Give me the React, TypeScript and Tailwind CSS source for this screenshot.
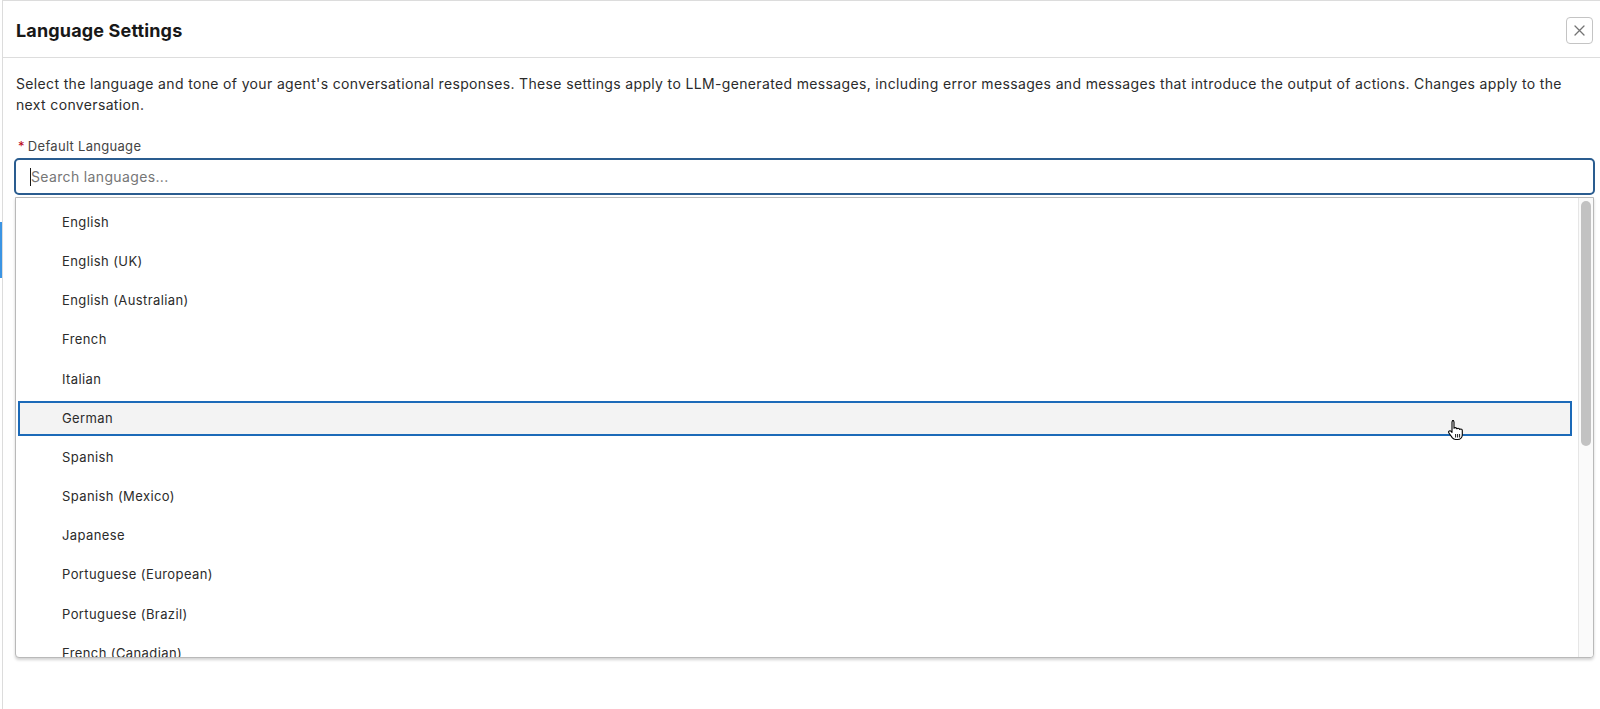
import React from "react";

const languages = [
  "English",
  "English (UK)",
  "English (Australian)",
  "French",
  "Italian",
  "German",
  "Spanish",
  "Spanish (Mexico)",
  "Japanese",
  "Portuguese (European)",
  "Portuguese (Brazil)",
  "French (Canadian)",
  "Chinese (Simplified)",
];

function HandCursor() {
  return (
    <svg width="18" height="22" viewBox="0 0 18 22" className="absolute left-[1429px] top-[20px] z-10">
      <path
        d="M5.5 1.5c.9 0 1.5.7 1.5 1.5v6.2c.3-.4.8-.6 1.3-.6.8 0 1.4.5 1.5 1.2.3-.4.8-.6 1.3-.6.8 0 1.4.6 1.5 1.3.3-.3.7-.5 1.2-.5.9 0 1.5.7 1.5 1.6v4.2c0 2.7-2 4.7-4.6 4.7H8.6c-1.3 0-2.4-.6-3.2-1.6L1.9 14c-.5-.7-.4-1.6.3-2 .6-.4 1.4-.3 1.9.3l.9 1.1V3c0-.8.6-1.5 1.5-1.5z"
        fill="#ffffff"
        stroke="#000000"
        strokeWidth="1.1"
        strokeLinejoin="round"
      />
      <path d="M8.6 15v3.5M10.6 15v3.5M12.6 15v3.5" stroke="#000" strokeWidth="0.9" />
    </svg>
  );
}

export default function App() {
  return (
    <div className="flex h-[709px] w-[1600px] overflow-hidden bg-white font-['Inter',sans-serif] text-[#181818]">
      <div className="w-[2px] shrink-0 bg-white pt-[222px]">
        <div className="h-[56px] w-[2px] bg-[#3b94e3]" />
      </div>
      <div className="flex min-w-0 flex-1 flex-col border-l border-t border-[#dcdcdc] bg-white">
        <div className="flex h-[57px] shrink-0 items-center justify-between border-b border-[#dddddd] pl-[13px] pr-[7px] pt-[2px]">
          <h2 className="text-[18px] font-bold tracking-[0.15px] text-[#181818]">Language Settings</h2>
          <button className="flex h-[27px] w-[27px] items-center justify-center rounded-[4px] border border-[#c4c4c4] bg-white">
            <svg width="11" height="11" viewBox="0 0 11 11">
              <path d="M1 1L10 10M10 1L1 10" stroke="#747474" strokeWidth="1.3" strokeLinecap="round" />
            </svg>
          </button>
        </div>
        <div className="flex flex-1 flex-col pl-[11px] pr-[5px] pt-[15px]">
          <p className="pl-[2px] pr-[20px] text-[14px] leading-[21px] tracking-[0.35px] text-[#2b2b2b]">
            Select the language and tone of your agent's conversational responses. These settings apply to LLM-generated messages, including error messages and messages that introduce the output of actions. Changes apply to the next conversation.
          </p>
          <label className="mt-[23px] flex items-center pl-[4px] text-[13px] leading-[16px] tracking-[0.3px] text-[#444444]">
            <span className="mr-[3px] text-[#ba0517]">*</span>
            Default Language
          </label>
          <div className="mt-[4px] flex h-[37px] items-center rounded-[5px] border-2 border-[#2a5c8f] bg-white pl-[14px]">
            <span className="h-[18px] w-[1px] bg-[#181818]" />
            <span className="text-[14px] tracking-[0.35px] text-[#767676]">Search languages...</span>
          </div>
          <div className="relative mx-[1px] mt-[2px] flex h-[461px] overflow-hidden rounded-b-[4px] border border-[#b9b9b9] bg-white shadow-[0_2px_3px_rgba(0,0,0,0.18)]">
            <div className="flex-1 overflow-hidden pl-[2px] pr-[6px] pt-[5px]">
              {languages.map((lang) => {
                const active = lang === "German";
                return (
                  <div key={lang} className="relative h-[39.2px] py-[2px]">
                    <div
                      className={
                        active
                          ? "flex h-[35px] items-center border-2 border-[#1c6ab8] bg-[#f3f3f3] pl-[42px] text-[13px] tracking-[0.4px] text-[#2b2b2b]"
                          : "flex h-[35px] items-center border-2 border-transparent pl-[42px] text-[13px] tracking-[0.4px] text-[#2b2b2b]"
                      }
                    >
                      {lang}
                    </div>
                    {active && <HandCursor />}
                  </div>
                );
              })}
            </div>
            <div className="w-[15px] shrink-0 border-l border-[#e6e6e6] bg-[#fafafa] px-[2px] pt-[3px]">
              <div className="h-[245px] w-[10px] rounded-full bg-[#c2c2c2]" />
            </div>
          </div>
        </div>
      </div>
    </div>
  );
}
